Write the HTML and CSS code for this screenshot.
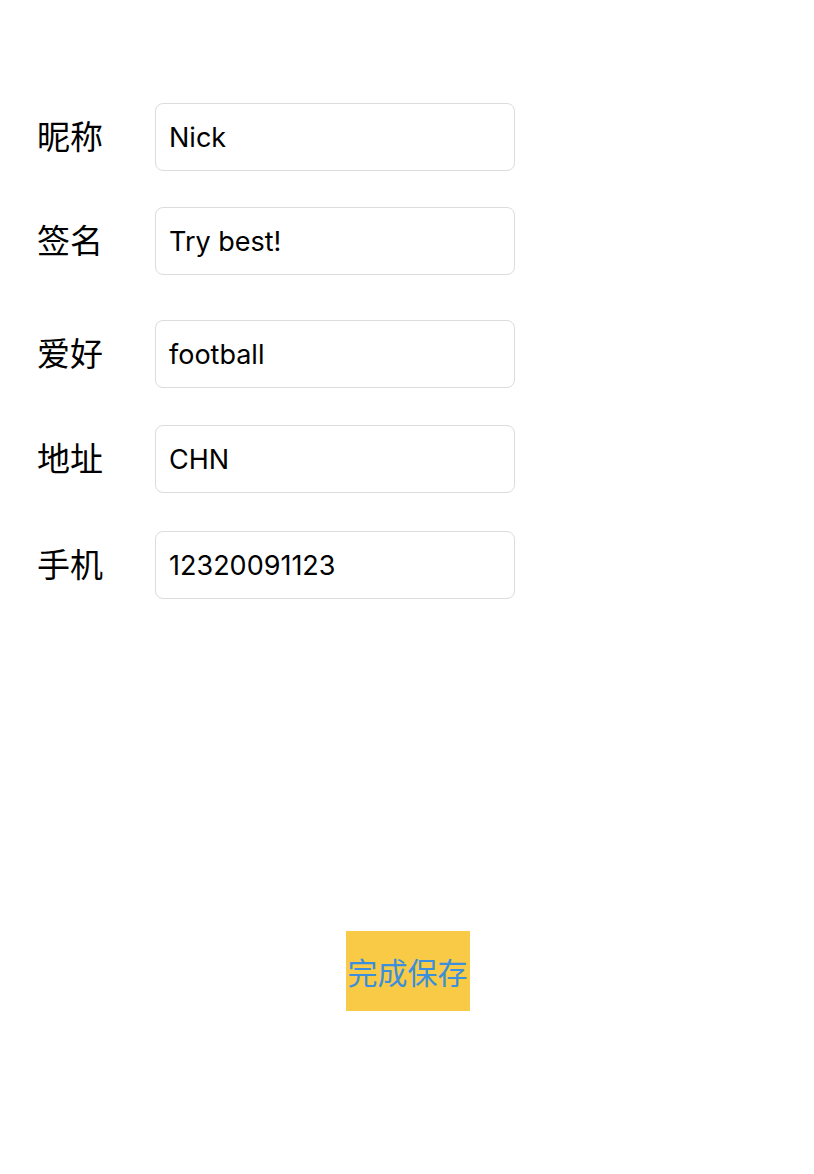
FILE: index.html
```html
<!DOCTYPE html>
<html lang="zh">
<head>
<meta charset="utf-8">
<title>编辑资料</title>
<link rel="stylesheet" href="styles.css">
</head>
<body>
<main class="page">
  <form class="form">
    <div class="row row-1">
      <label class="label">昵称</label>
      <div class="field">Nick</div>
    </div>
    <div class="row row-2">
      <label class="label">签名</label>
      <div class="field">Try best!</div>
    </div>
    <div class="row row-3">
      <label class="label">爱好</label>
      <div class="field">football</div>
    </div>
    <div class="row row-4">
      <label class="label">地址</label>
      <div class="field">CHN</div>
    </div>
    <div class="row row-5">
      <label class="label">手机</label>
      <div class="field">12320091123</div>
    </div>
  </form>
  <div class="actions">
    <button type="button" class="save">完成保存</button>
  </div>
</main>
</body>
</html>
```

FILE: styles.css
```css
* { box-sizing: border-box; }
html, body {
  margin: 0;
  padding: 0;
  background: #ffffff;
}
body {
  width: 814px;
  height: 1174px;
  font-family: "Noto Sans", "Noto Sans CJK SC", sans-serif;
  color: #000;
}
.page {
  display: flex;
  flex-direction: column;
}
.form {
  display: flex;
  flex-direction: column;
  padding: 103px 0 0 37px;
}
.row {
  display: flex;
  align-items: center;
  height: 68px;
}
.row-2 { margin-top: 36px; }
.row-3 { margin-top: 45px; }
.row-4 { margin-top: 37px; }
.row-5 { margin-top: 38px; }
.label {
  width: 118px;
  padding-bottom: 3px;
  font-family: "Noto Sans CJK SC", sans-serif;
  font-size: 33px;
  line-height: 1;
  color: #000;
}
.field {
  width: 360px;
  height: 68px;
  border: 1px solid #dcdcdc;
  border-radius: 8px;
  padding: 0 14px 0 13px;
  display: flex;
  align-items: center;
  font-family: "Inter", "Noto Sans CJK SC", sans-serif;
  font-size: 27px;
  color: #000;
}
.actions {
  display: flex;
  justify-content: center;
  margin-top: 332px;
}
.save {
  width: 124px;
  height: 80px;
  margin-left: 1px;
  border: none;
  border-radius: 0;
  padding: 0;
  background: #f8ca45;
  color: #3b8fdc;
  font-family: "Noto Sans CJK SC", sans-serif;
  font-size: 30px;
  line-height: 1;
}
```
